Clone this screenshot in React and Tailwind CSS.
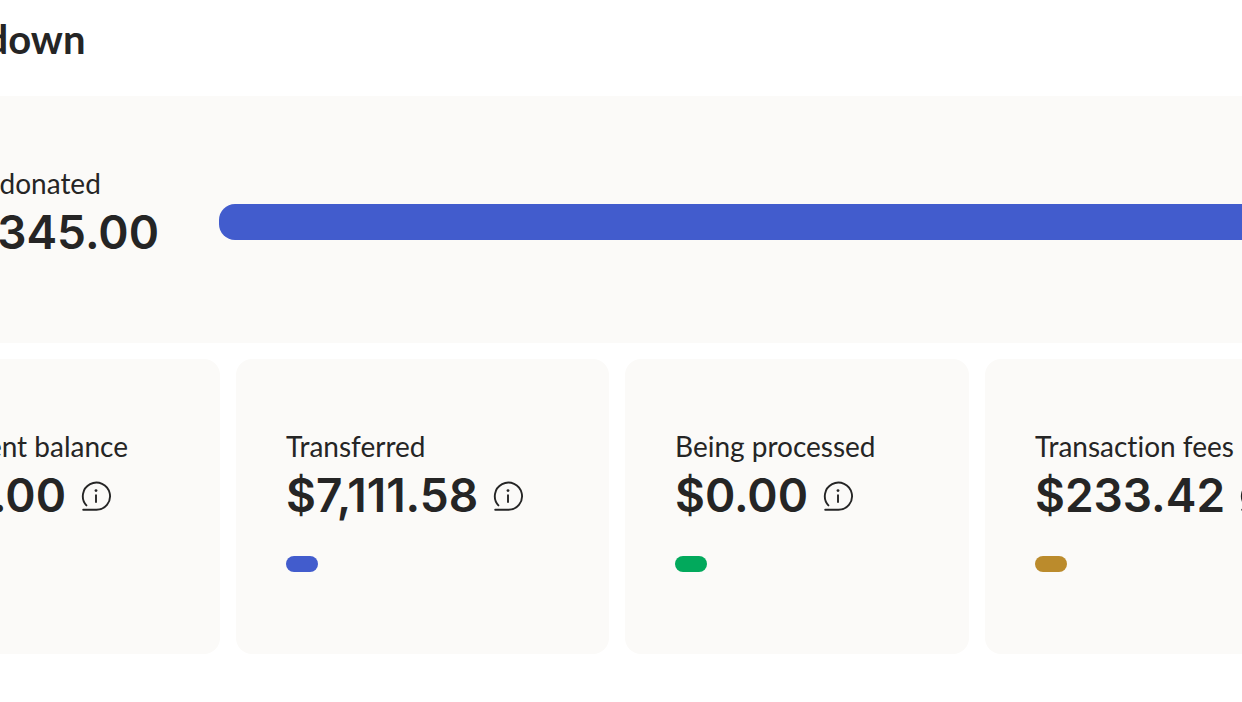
import clsx from 'clsx'

const BALANCES = [
  { id: 'current', label: 'Current balance', value: '$0.00', pill: null },
  { id: 'transferred', label: 'Transferred', value: '$7,111.58', pill: 'bg-[#425ccd]' },
  { id: 'processing', label: 'Being processed', value: '$0.00', pill: 'bg-[#02a95c]' },
  { id: 'fees', label: 'Transaction fees', value: '$233.42', pill: 'bg-[#bb8b2c]' },
]

function InfoIcon() {
  return (
    <svg className="h-8 w-8" viewBox="0 0 32 32" fill="none" aria-hidden="true">
      <path
        d="M6.4 26.4A13.6 13.6 0 1 1 16 30.8H3.2"
        stroke="currentColor"
        strokeWidth="1.9"
        strokeLinecap="round"
        strokeLinejoin="round"
      />
      <path d="M16 15.4v8.4" stroke="currentColor" strokeWidth="1.9" />
      <circle cx="16" cy="11.6" r="1.4" fill="currentColor" />
    </svg>
  )
}

function Amount({ label, value, info }) {
  return (
    <div>
      <p className="font-['Lato',sans-serif] text-[28px] leading-9 whitespace-nowrap">{label}</p>
      <div className="flex items-center gap-3.5">
        <p className="text-[46px] leading-[62px] font-semibold whitespace-nowrap">{value}</p>
        {info && (
          <button type="button" className="shrink-0" aria-label={`About ${label.toLowerCase()}`}>
            <InfoIcon />
          </button>
        )}
      </div>
    </div>
  )
}

function BalanceCard({ label, value, pill }) {
  return (
    <section className="min-w-0 rounded-2xl bg-[#fbfaf8] px-[50px] pt-[69px] pb-[82px]">
      <Amount label={label} value={value} info />
      {pill && <div className={clsx('mt-[30px] h-4 w-8 rounded-full', pill)} />}
    </section>
  )
}

export default function App() {
  return (
    <main className="min-h-screen overflow-hidden bg-white font-['Inter',sans-serif] text-[#252525] [font-variant-ligatures:no-common-ligatures]">
      <div className="-mr-[120px] -ml-[117px]">
        <h2 className="pt-[15px] pb-[33px] font-['Lato',sans-serif] text-[40px] leading-[48px] font-bold">
          Breakdown
        </h2>

        <section className="flex gap-[60px] rounded-2xl bg-[#fbfaf8] px-[50px] pt-[69px] pb-20">
          <Amount label="Total donated" value="$7,345.00" />
          <div className="mt-[39px] h-9 flex-1 rounded-2xl bg-[#425ccd]" />
        </section>

        <div className="mt-4 grid grid-cols-[337fr_373fr_344fr_377fr] gap-4">
          {BALANCES.map((balance) => (
            <BalanceCard key={balance.id} {...balance} />
          ))}
        </div>
      </div>
    </main>
  )
}
